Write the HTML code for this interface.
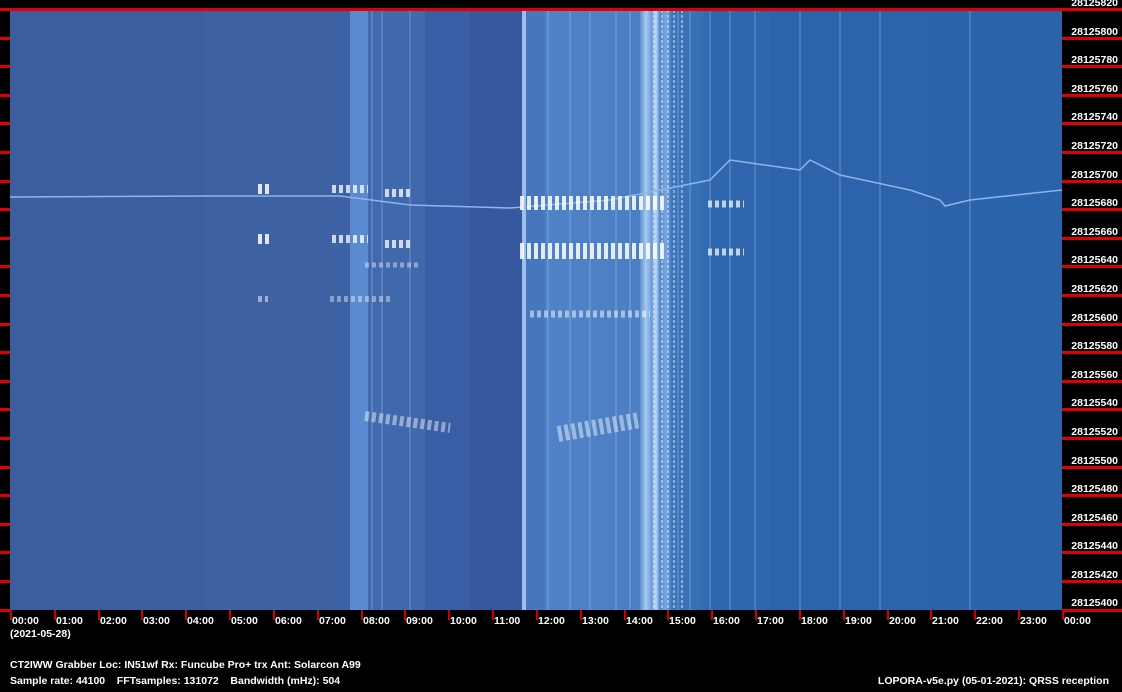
<!DOCTYPE html>
<html><head><meta charset="utf-8"><style>
body{margin:0;width:1122px;height:692px;background:#000;position:relative;overflow:hidden;font-family:"Liberation Sans",sans-serif;font-weight:bold;color:#fff;font-size:10.5px}
.sp{position:absolute;left:10px;top:10px;width:1052px;height:600px;
background:linear-gradient(90deg,#3c5e9e 0,#3c5e9f 195px,#3e61a3 195px,#3e61a3 340px,#5a8ad0 340px,#5a8ad0 358px,#4169ad 358px,#4068ab 415px,#3a5ea6 415px,#3a5ea6 460px,#36579d 460px,#37589e 512px,#9cc0ee 512px,#9cc0ee 516px,#4676bc 516px,#4676bc 535px,#4f82c6 535px,#4c7ec3 630px,#5d8fd0 630px,#a8c8f0 636px,#6a9ad8 642px,#c0d8f6 646px,#4f85c8 650px,#7aa8e4 656px,#3d74b8 662px,#3670b5 690px,#2f67ae 700px,#2f66ad 760px,#2c63aa 760px,#2b63aa 1052px)}
.rt{position:absolute;height:3px;background:#e00000}
.lb{position:absolute;right:4px;text-align:right}
.bt{position:absolute;top:610px;width:2px;height:10px;background:#d00000}
.bl{position:absolute;top:615px}
</style></head><body>
<div class="sp"></div>
<svg style="position:absolute;left:10px;top:10px" width="1052" height="600">
<g opacity="0.35" stroke="#cfe2ff" stroke-width="1">
<line x1="362" y1="0" x2="362" y2="600"/><line x1="372" y1="0" x2="372" y2="600"/><line x1="400" y1="0" x2="400" y2="600"/><line x1="538" y1="0" x2="538" y2="600"/><line x1="560" y1="0" x2="560" y2="600"/><line x1="580" y1="0" x2="580" y2="600"/><line x1="606" y1="0" x2="606" y2="600"/><line x1="620" y1="0" x2="620" y2="600"/><line x1="668" y1="0" x2="668" y2="600"/><line x1="680" y1="0" x2="680" y2="600"/><line x1="700" y1="0" x2="700" y2="600"/><line x1="720" y1="0" x2="720" y2="600"/><line x1="745" y1="0" x2="745" y2="600"/><line x1="790" y1="0" x2="790" y2="600"/><line x1="830" y1="0" x2="830" y2="600"/><line x1="870" y1="0" x2="870" y2="600"/><line x1="960" y1="0" x2="960" y2="600"/></g>
<g opacity="0.6" stroke="#f0f6ff" stroke-width="1.5" stroke-dasharray="3 2">
<line x1="644" y1="0" x2="644" y2="600"/><line x1="652" y1="0" x2="652" y2="600"/><line x1="658" y1="0" x2="658" y2="600"/><line x1="664" y1="0" x2="664" y2="600"/><line x1="672" y1="0" x2="672" y2="600"/></g>
<polyline fill="none" stroke="#8fb4ea" stroke-width="1.5" points="0,187 200,186 330,186 400,195 500,198 600,190 700,170 720,150 790,160 800,150 830,165 900,180 930,190 935,196 960,190 1052,180"/>
<g stroke="#fff" fill="none" stroke-dasharray="4 3">
<line x1="248" y1="179" x2="262" y2="179" stroke-width="10" opacity=".85"/><line x1="248" y1="229" x2="262" y2="229" stroke-width="10" opacity=".85"/>
<line x1="322" y1="179" x2="358" y2="179" stroke-width="8" opacity=".75"/><line x1="322" y1="229" x2="358" y2="229" stroke-width="8" opacity=".75"/>
<line x1="375" y1="183" x2="400" y2="183" stroke-width="8" opacity=".75"/><line x1="375" y1="234" x2="400" y2="234" stroke-width="8" opacity=".75"/>
<line x1="510" y1="193" x2="655" y2="193" stroke-width="14" opacity=".85"/><line x1="510" y1="241" x2="655" y2="241" stroke-width="16" opacity=".85"/>
<line x1="698" y1="194" x2="734" y2="194" stroke-width="7" opacity=".7"/><line x1="698" y1="242" x2="734" y2="242" stroke-width="7" opacity=".7"/>
<line x1="520" y1="304" x2="640" y2="304" stroke-width="7" opacity=".5"/><line x1="355" y1="255" x2="410" y2="255" stroke-width="5" opacity=".4"/>
<line x1="355" y1="406" x2="440" y2="418" stroke-width="10" opacity=".45"/><line x1="548" y1="424" x2="630" y2="410" stroke-width="16" opacity=".45"/>
<line x1="248" y1="289" x2="258" y2="289" stroke-width="6" opacity=".5"/><line x1="320" y1="289" x2="380" y2="289" stroke-width="6" opacity=".4"/>
</g></svg>
<div class="rt" style="left:0;width:1122px;top:8px"></div>
<div class="lb" style="top:-3px">28125820</div>
<div class="rt" style="left:1062px;width:60px;top:37px"></div><div class="rt" style="left:0;width:10px;top:37px"></div><div class="lb" style="top:26px">28125800</div>
<div class="rt" style="left:1062px;width:60px;top:65px"></div><div class="rt" style="left:0;width:10px;top:65px"></div><div class="lb" style="top:54px">28125780</div>
<div class="rt" style="left:1062px;width:60px;top:94px"></div><div class="rt" style="left:0;width:10px;top:94px"></div><div class="lb" style="top:83px">28125760</div>
<div class="rt" style="left:1062px;width:60px;top:122px"></div><div class="rt" style="left:0;width:10px;top:122px"></div><div class="lb" style="top:111px">28125740</div>
<div class="rt" style="left:1062px;width:60px;top:151px"></div><div class="rt" style="left:0;width:10px;top:151px"></div><div class="lb" style="top:140px">28125720</div>
<div class="rt" style="left:1062px;width:60px;top:180px"></div><div class="rt" style="left:0;width:10px;top:180px"></div><div class="lb" style="top:169px">28125700</div>
<div class="rt" style="left:1062px;width:60px;top:208px"></div><div class="rt" style="left:0;width:10px;top:208px"></div><div class="lb" style="top:197px">28125680</div>
<div class="rt" style="left:1062px;width:60px;top:237px"></div><div class="rt" style="left:0;width:10px;top:237px"></div><div class="lb" style="top:226px">28125660</div>
<div class="rt" style="left:1062px;width:60px;top:265px"></div><div class="rt" style="left:0;width:10px;top:265px"></div><div class="lb" style="top:254px">28125640</div>
<div class="rt" style="left:1062px;width:60px;top:294px"></div><div class="rt" style="left:0;width:10px;top:294px"></div><div class="lb" style="top:283px">28125620</div>
<div class="rt" style="left:1062px;width:60px;top:323px"></div><div class="rt" style="left:0;width:10px;top:323px"></div><div class="lb" style="top:312px">28125600</div>
<div class="rt" style="left:1062px;width:60px;top:351px"></div><div class="rt" style="left:0;width:10px;top:351px"></div><div class="lb" style="top:340px">28125580</div>
<div class="rt" style="left:1062px;width:60px;top:380px"></div><div class="rt" style="left:0;width:10px;top:380px"></div><div class="lb" style="top:369px">28125560</div>
<div class="rt" style="left:1062px;width:60px;top:408px"></div><div class="rt" style="left:0;width:10px;top:408px"></div><div class="lb" style="top:397px">28125540</div>
<div class="rt" style="left:1062px;width:60px;top:437px"></div><div class="rt" style="left:0;width:10px;top:437px"></div><div class="lb" style="top:426px">28125520</div>
<div class="rt" style="left:1062px;width:60px;top:466px"></div><div class="rt" style="left:0;width:10px;top:466px"></div><div class="lb" style="top:455px">28125500</div>
<div class="rt" style="left:1062px;width:60px;top:494px"></div><div class="rt" style="left:0;width:10px;top:494px"></div><div class="lb" style="top:483px">28125480</div>
<div class="rt" style="left:1062px;width:60px;top:523px"></div><div class="rt" style="left:0;width:10px;top:523px"></div><div class="lb" style="top:512px">28125460</div>
<div class="rt" style="left:1062px;width:60px;top:551px"></div><div class="rt" style="left:0;width:10px;top:551px"></div><div class="lb" style="top:540px">28125440</div>
<div class="rt" style="left:1062px;width:60px;top:580px"></div><div class="rt" style="left:0;width:10px;top:580px"></div><div class="lb" style="top:569px">28125420</div>
<div class="rt" style="left:1062px;width:60px;top:609px"></div><div class="rt" style="left:0;width:10px;top:609px"></div><div class="lb" style="top:597px">28125400</div>

<div class="bt" style="left:10px"></div><div class="bl" style="left:12px">00:00</div>
<div class="bt" style="left:54px"></div><div class="bl" style="left:56px">01:00</div>
<div class="bt" style="left:98px"></div><div class="bl" style="left:100px">02:00</div>
<div class="bt" style="left:141px"></div><div class="bl" style="left:143px">03:00</div>
<div class="bt" style="left:185px"></div><div class="bl" style="left:187px">04:00</div>
<div class="bt" style="left:229px"></div><div class="bl" style="left:231px">05:00</div>
<div class="bt" style="left:273px"></div><div class="bl" style="left:275px">06:00</div>
<div class="bt" style="left:317px"></div><div class="bl" style="left:319px">07:00</div>
<div class="bt" style="left:361px"></div><div class="bl" style="left:363px">08:00</div>
<div class="bt" style="left:404px"></div><div class="bl" style="left:406px">09:00</div>
<div class="bt" style="left:448px"></div><div class="bl" style="left:450px">10:00</div>
<div class="bt" style="left:492px"></div><div class="bl" style="left:494px">11:00</div>
<div class="bt" style="left:536px"></div><div class="bl" style="left:538px">12:00</div>
<div class="bt" style="left:580px"></div><div class="bl" style="left:582px">13:00</div>
<div class="bt" style="left:624px"></div><div class="bl" style="left:626px">14:00</div>
<div class="bt" style="left:667px"></div><div class="bl" style="left:669px">15:00</div>
<div class="bt" style="left:711px"></div><div class="bl" style="left:713px">16:00</div>
<div class="bt" style="left:755px"></div><div class="bl" style="left:757px">17:00</div>
<div class="bt" style="left:799px"></div><div class="bl" style="left:801px">18:00</div>
<div class="bt" style="left:843px"></div><div class="bl" style="left:845px">19:00</div>
<div class="bt" style="left:887px"></div><div class="bl" style="left:889px">20:00</div>
<div class="bt" style="left:930px"></div><div class="bl" style="left:932px">21:00</div>
<div class="bt" style="left:974px"></div><div class="bl" style="left:976px">22:00</div>
<div class="bt" style="left:1018px"></div><div class="bl" style="left:1020px">23:00</div>
<div class="bt" style="left:1062px"></div><div class="bl" style="left:1064px">00:00</div>
<div style="position:absolute;left:10px;top:628px">(2021-05-28)</div>
<div style="position:absolute;left:10px;top:659px">CT2IWW Grabber Loc: IN51wf Rx: Funcube Pro+ trx Ant: Solarcon A99</div>
<div style="position:absolute;left:10px;top:675px">Sample rate: 44100 &nbsp;&nbsp; FFTsamples: 131072 &nbsp;&nbsp; Bandwidth (mHz): 504</div>
<div style="position:absolute;right:13px;top:675px">LOPORA-v5e.py (05-01-2021): QRSS reception</div>
</body></html>
